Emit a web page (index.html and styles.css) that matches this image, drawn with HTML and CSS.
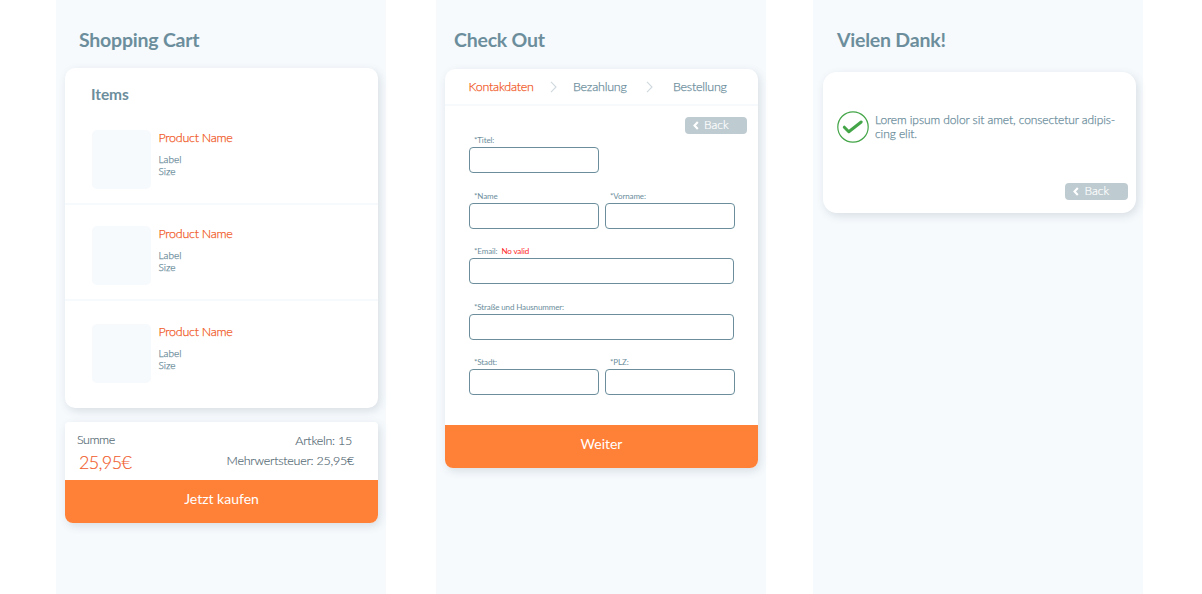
FILE: index.html
```html
<!DOCTYPE html>
<html lang="de">
<head>
<meta charset="utf-8">
<title>Shop</title>
<link rel="stylesheet" href="styles.css">
</head>
<body>
<main class="screens">
  <section class="screen cart">
    <h1 class="title"><span>Shopping Cart</span></h1>
    <div class="card items">
      <h2 class="items-title"><span>Items</span></h2>
      <article class="item">
        <div class="thumb"></div>
        <div class="info"><p class="product"><span>Product Name</span></p><p class="meta">Label</p><p class="meta">Size</p></div>
      </article>
      <article class="item">
        <div class="thumb"></div>
        <div class="info"><p class="product"><span>Product Name</span></p><p class="meta">Label</p><p class="meta">Size</p></div>
      </article>
      <article class="item last">
        <div class="thumb"></div>
        <div class="info"><p class="product"><span>Product Name</span></p><p class="meta">Label</p><p class="meta">Size</p></div>
      </article>
    </div>
    <div class="card summary">
      <div class="totals">
        <div class="sum"><p class="sum-label"><span>Summe</span></p><p class="price"><span>25,95€</span></p></div>
        <div class="details"><p class="count"><span>Artkeln: 15</span></p><p class="tax"><span>Mehrwertsteuer: 25,95€</span></p></div>
      </div>
      <button class="primary"><span>Jetzt kaufen</span></button>
    </div>
  </section>

  <section class="screen checkout">
    <h1 class="title"><span>Check Out</span></h1>
    <div class="card form-card">
      <nav class="steps">
        <span class="step active">Kontakdaten</span>
        <svg class="chevron" width="7" height="12" viewBox="0 0 7 12"><path d="M1 .8 6 6 1 11.2"/></svg>
        <span class="step pay">Bezahlung</span>
        <svg class="chevron second" width="7" height="12" viewBox="0 0 7 12"><path d="M1 .8 6 6 1 11.2"/></svg>
        <span class="step order">Bestellung</span>
      </nav>
      <div class="toolbar">
        <button class="back"><svg width="6" height="9" viewBox="0 0 6 9"><path d="M4.8 1 1.5 4.5 4.8 8"/></svg><span>Back</span></button>
      </div>
      <form class="fields">
        <div class="row"><label class="field"><span class="label">*Titel:</span><input class="input"></label></div>
        <div class="row">
          <label class="field"><span class="label">*Name</span><input class="input"></label>
          <label class="field"><span class="label">*Vorname:</span><input class="input"></label>
        </div>
        <div class="row"><label class="field wide"><span class="label">*Email: <em class="error">No valid</em></span><input class="input"></label></div>
        <div class="row"><label class="field wide"><span class="label">*Straße und Hausnummer:</span><input class="input"></label></div>
        <div class="row">
          <label class="field"><span class="label">*Stadt:</span><input class="input"></label>
          <label class="field"><span class="label">*PLZ:</span><input class="input"></label>
        </div>
      </form>
      <button class="primary"><span>Weiter</span></button>
    </div>
  </section>

  <section class="screen thanks">
    <h1 class="title"><span>Vielen Dank!</span></h1>
    <div class="card thanks-card">
      <div class="message">
        <svg class="check" width="32" height="32" viewBox="0 0 32 32"><circle cx="16" cy="16" r="15.2"/><path d="m7.3 16.2 4.5 4.5L24.2 11"/></svg>
        <p class="message-text"><span>Lorem ipsum dolor sit amet, consectetur adipis-<br>cing elit.</span></p>
      </div>
      <button class="back"><svg width="6" height="9" viewBox="0 0 6 9"><path d="M4.8 1 1.5 4.5 4.8 8"/></svg><span>Back</span></button>
    </div>
  </section>
</main>
</body>
</html>
```

FILE: styles.css
```css
* { box-sizing: border-box; }
body, h1, h2, p { margin: 0; }
body {
  background: #fff;
  color: #6c8e9c;
  font-family: Lato, sans-serif;
  font-weight: 300;
  overflow: hidden;
}
svg { display: block; fill: none; flex: none; }
button { border: 0; padding: 0; font: inherit; color: #fff; }

.screens { display: flex; height: 594px; padding-left: 56px; }
.screen { width: 330px; flex: none; padding: 28px 8px 0 9px; background: #f6fafd; white-space: nowrap; }
.checkout { margin-left: 50px; }
.thanks { margin-left: 47px; padding-left: 10px; padding-right: 7px; }
.title { height: 40px; padding-left: 14px; font-size: 19.5px; font-weight: 700; line-height: 24px; letter-spacing: -.22px; }
.checkout .title { height: 41px; padding-left: 9px; }
.thanks .title { height: 43.5px; padding-left: 14px; }

.card { display: flex; flex-direction: column; background: #fff; box-shadow: 2px 3px 8px rgba(60, 80, 100, .16); }

.items { height: 340px; border-radius: 10px; }
.items-title { height: 46px; padding: 16px 0 0 26px; font-size: 15.5px; font-weight: 700; line-height: 20px; letter-spacing: -.1px; }
.item { display: flex; gap: 8px; height: 91px; padding: 16px 0 0 27px; border-bottom: 2px solid #f6fafd; }
.item + .item { height: 96px; padding-top: 21px; }
.item.last { height: 107px; padding-top: 23px; border: 0; }
.thumb { width: 58.5px; height: 59px; border-radius: 5px; background: #f6fafd; }
.info { -webkit-text-stroke: .25px currentColor; }
.product { height: 23px; color: #f15a29; font-size: 12.5px; line-height: 16px; letter-spacing: -.27px; }
.meta { font-size: 10px; line-height: 12px; }

.summary { height: 100.5px; margin-top: 14px; border-radius: 4px 4px 8px 8px; }
.totals { display: flex; justify-content: space-between; height: 58px; padding: 10px 24px 0 12px; color: #4f6670; font-size: 12.5px; line-height: 16px; letter-spacing: -.25px; -webkit-text-stroke: .15px currentColor; }
.sum-label { letter-spacing: -.45px; }
.price { padding: 3px 0 0 2px; color: #f15a29; font-size: 18px; line-height: 22px; letter-spacing: -.65px; }
.details { text-align: right; }
.count { padding: 1px 2px 0 0; }
.tax { padding-top: 4px; }
.primary { display: flex; justify-content: center; height: 42.5px; padding-top: 9px; border-radius: 0 0 8px 8px; background: #ff8138; font-size: 14px; font-weight: 400; line-height: 20px; }

.form-card { height: 398.5px; border-radius: 10px 10px 8px 8px; }
.steps { display: flex; height: 37px; padding: 10px 0 0 23.5px; border-bottom: 2px solid #f6fafd; font-size: 12.5px; line-height: 16px; letter-spacing: -.23px; -webkit-text-stroke: .25px currentColor; }
.step { width: 81px; }
.step.active { color: #f15a29; }
.step.pay { width: 73px; }
.chevron { width: 7px; margin: 2px 16.5px 0 0; stroke: #cfd9de; stroke-width: 1.1; }
.chevron.second { margin-right: 20px; }
.toolbar { display: flex; justify-content: flex-end; height: 29px; padding: 11px 11px 0 0; }
.back { display: flex; align-items: center; gap: 5.5px; width: 62.5px; height: 16.5px; padding-left: 8px; border-radius: 4px; background: #becbd1; font-size: 12px; line-height: 16px; -webkit-text-stroke: .2px currentColor; }
.back svg { stroke: #fff; stroke-width: 2.1; }

.fields { display: flex; flex-direction: column; gap: 17.5px; height: 290px; padding-left: 24px; }
.row { display: flex; gap: 6px; height: 38px; }
.field { display: flex; flex-direction: column; width: 130px; }
.field.wide { width: 265px; }
.label { height: 12px; padding-left: 5px; font-size: 8px; font-weight: 400; line-height: 10px; letter-spacing: -.12px; }
.error { margin-left: 2px; color: #ff1d25; font-style: normal; }
.input { width: 100%; height: 26px; border: 1px solid #6c8e9c; border-radius: 4px; background: #fff; outline: 0; }

.thanks-card { height: 141.5px; padding: 39.5px 8.5px 0 14px; border-radius: 14px; }
.message { display: flex; gap: 6px; height: 72px; }
.check { stroke: #43a547; stroke-width: 1.2; }
.check path { stroke-width: 3; stroke-linecap: round; stroke-linejoin: round; }
.message-text { padding-top: 2px; font-size: 12px; line-height: 14px; letter-spacing: -.08px; -webkit-text-stroke: .25px currentColor; }
.thanks .back { align-self: flex-end; }
```
